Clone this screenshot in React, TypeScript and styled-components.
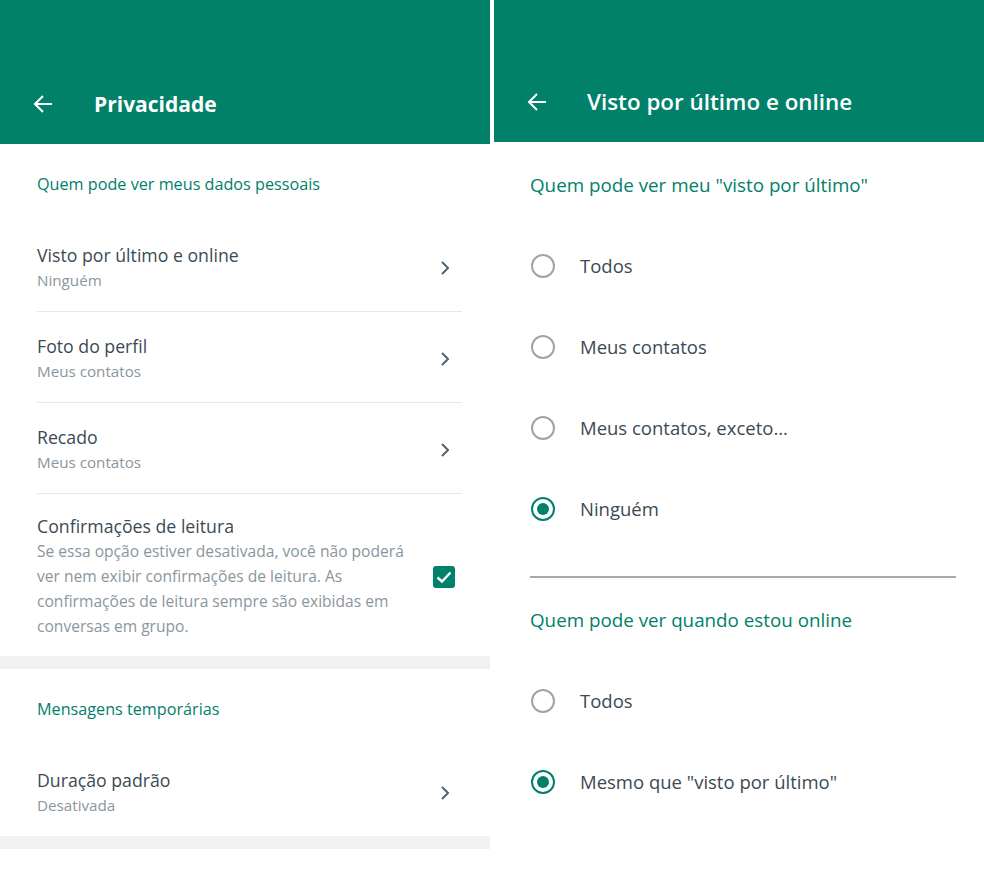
import React from "react";
import styled, { createGlobalStyle } from "styled-components";

const GlobalStyle = createGlobalStyle`
  html, body { margin: 0; padding: 0; background: #ffffff; }
  body { font-family: "Open Sans", "Noto Sans", sans-serif; -webkit-font-smoothing: antialiased; }
  * { box-sizing: border-box; }
`;

const GREEN = "#01806a";
const TEXT = "#3b4a54";
const MUTED = "#8a969e";

const Page = styled.div`
  display: flex;
  gap: 4px;
  width: 984px;
  height: 871px;
  background: #fff;
  overflow: hidden;
`;

const Panel = styled.div`
  width: 490px;
  display: flex;
  flex-direction: column;
  background: #fff;
`;

const Header = styled.header<{ $h: number; $bottom: number; $titleGap: number }>`
  height: ${(p) => p.$h}px;
  background: ${GREEN};
  display: flex;
  align-items: flex-end;
  padding: 0 0 ${(p) => p.$bottom}px 33px;
  gap: ${(p) => p.$titleGap}px;
`;

const HeaderRow = styled.div`
  display: flex;
  align-items: center;
  height: 24px;
`;

const BackIcon = styled.svg`
  width: 20px;
  height: 20px;
  flex: none;
`;

const Title = styled.h1<{ $weight: number; $size: number }>`
  margin: 0;
  color: #fff;
  font-size: ${(p) => p.$size}px;
  font-weight: ${(p) => p.$weight};
  line-height: 24px;
  white-space: nowrap;
`;

const SectionTitle = styled.div`
  color: ${GREEN};
  font-size: 16.2px;
  line-height: 20px;
  padding: 30px 0 27px 37px;
`;

const List = styled.div`
  margin-left: 37px;
  width: 425px;
`;

const Item = styled.div<{ $top?: number; $bottom?: number; $divider?: boolean }>`
  display: flex;
  align-items: center;
  padding: ${(p) => p.$top ?? 22}px 0 ${(p) => p.$bottom ?? 18}px;
  border-bottom: ${(p) => (p.$divider ? "1px solid #e6e8ea" : "none")};
`;

const ItemText = styled.div`
  flex: 1;
  min-width: 0;
`;

const ItemTitle = styled.div`
  color: ${TEXT};
  font-size: 17.7px;
  line-height: 25px;
`;

const ItemSub = styled.div<{ $desc?: boolean }>`
  color: ${MUTED};
  font-size: ${(p) => (p.$desc ? 15.6 : 15.2)}px;
  line-height: 25px;
  white-space: nowrap;
`;

const Chevron = styled.svg`
  width: 8px;
  height: 14px;
  margin-right: 13px;
  flex: none;
`;

const Check = styled.div`
  width: 22px;
  height: 22px;
  border-radius: 3px;
  background: ${GREEN};
  margin-right: 7px;
  display: flex;
  align-items: center;
  justify-content: center;
  flex: none;
`;

const Band = styled.div`
  height: 13px;
  background: #eff1f3;
`;

const RightBody = styled.div`
  padding: 0 28px 0 36px;
`;

const RightSectionTitle = styled.div<{ $top: number }>`
  color: ${GREEN};
  font-size: 18.8px;
  line-height: 22px;
  padding: ${(p) => p.$top}px 0 29px 0;
`;

const RadioRow = styled.div`
  height: 81px;
  display: flex;
  align-items: center;
  gap: 25px;
  padding-left: 1px;
`;

const Radio = styled.span<{ $on?: boolean }>`
  width: 24px;
  height: 24px;
  border-radius: 50%;
  border: 2px solid ${(p) => (p.$on ? GREEN : "#a3a3a3")};
  display: flex;
  align-items: center;
  justify-content: center;
  flex: none;
  &::after {
    content: "";
    width: 12px;
    height: 12px;
    border-radius: 50%;
    background: ${GREEN};
    display: ${(p) => (p.$on ? "block" : "none")};
  }
`;

const RadioLabel = styled.span`
  color: ${TEXT};
  font-size: 18.5px;
  line-height: 24px;
`;

const Divider = styled.hr`
  margin: 27px 0 0 0;
  border: none;
  height: 2px;
  background: #a9a9a9;
`;

const Back = () => (
  <BackIcon viewBox="0 0 20 20" fill="none">
    <path d="M19 10H2M10 2L2 10L10 18" stroke="#fff" strokeWidth="2" />
  </BackIcon>
);

const Arrow = () => (
  <Chevron viewBox="0 0 8 14" fill="none">
    <path d="M1 1L7 7L1 13" stroke="#54656f" strokeWidth="2" />
  </Chevron>
);

type Row = { title: string; sub: string };

const NavItem = ({ title, sub, last }: Row & { last?: boolean }) => (
  <Item $divider={!last}>
    <ItemText>
      <ItemTitle>{title}</ItemTitle>
      <ItemSub>{sub}</ItemSub>
    </ItemText>
    <Arrow />
  </Item>
);

const RadioOption = ({ label, on }: { label: string; on?: boolean }) => (
  <RadioRow>
    <Radio $on={on} />
    <RadioLabel>{label}</RadioLabel>
  </RadioRow>
);

export default function App() {
  return (
    <>
      <GlobalStyle />
      <Page>
        <Panel>
          <Header $h={144} $bottom={28} $titleGap={41}>
            <HeaderRow>
              <Back />
            </HeaderRow>
            <HeaderRow>
              <Title $weight={700} $size={21}>Privacidade</Title>
            </HeaderRow>
          </Header>
          <SectionTitle>Quem pode ver meus dados pessoais</SectionTitle>
          <List>
            <NavItem title="Visto por último e online" sub="Ninguém" />
            <NavItem title="Foto do perfil" sub="Meus contatos" />
            <NavItem title="Recado" sub="Meus contatos" />
            <Item $top={20} $bottom={17}>
              <ItemText>
                <ItemTitle>Confirmações de leitura</ItemTitle>
                <ItemSub $desc>
                  Se essa opção estiver desativada, você não poderá
                  <br />
                  ver nem exibir confirmações de leitura. As
                  <br />
                  confirmações de leitura sempre são exibidas em
                  <br />
                  conversas em grupo.
                </ItemSub>
              </ItemText>
              <Check>
                <svg width="18" height="18" viewBox="0 0 18 18" fill="none">
                  <path d="M2.5 9.5L7 13.5L15.5 4.5" stroke="#fff" strokeWidth="2.4" />
                </svg>
              </Check>
            </Item>
          </List>
          <Band />
          <SectionTitle>Mensagens temporárias</SectionTitle>
          <List>
            <NavItem title="Duração padrão" sub="Desativada" last />
          </List>
          <Band />
        </Panel>
        <Panel>
          <Header $h={142} $bottom={28} $titleGap={40}>
            <HeaderRow>
              <Back />
            </HeaderRow>
            <HeaderRow>
              <Title $weight={600} $size={22.4}>Visto por último e online</Title>
            </HeaderRow>
          </Header>
          <RightBody>
            <RightSectionTitle $top={32}>Quem pode ver meu "visto por último"</RightSectionTitle>
            <RadioOption label="Todos" />
            <RadioOption label="Meus contatos" />
            <RadioOption label="Meus contatos, exceto..." />
            <RadioOption label="Ninguém" on />
            <Divider />
            <RightSectionTitle $top={31}>Quem pode ver quando estou online</RightSectionTitle>
            <RadioOption label="Todos" />
            <RadioOption label={'Mesmo que "visto por último"'} on />
          </RightBody>
        </Panel>
      </Page>
    </>
  );
}
